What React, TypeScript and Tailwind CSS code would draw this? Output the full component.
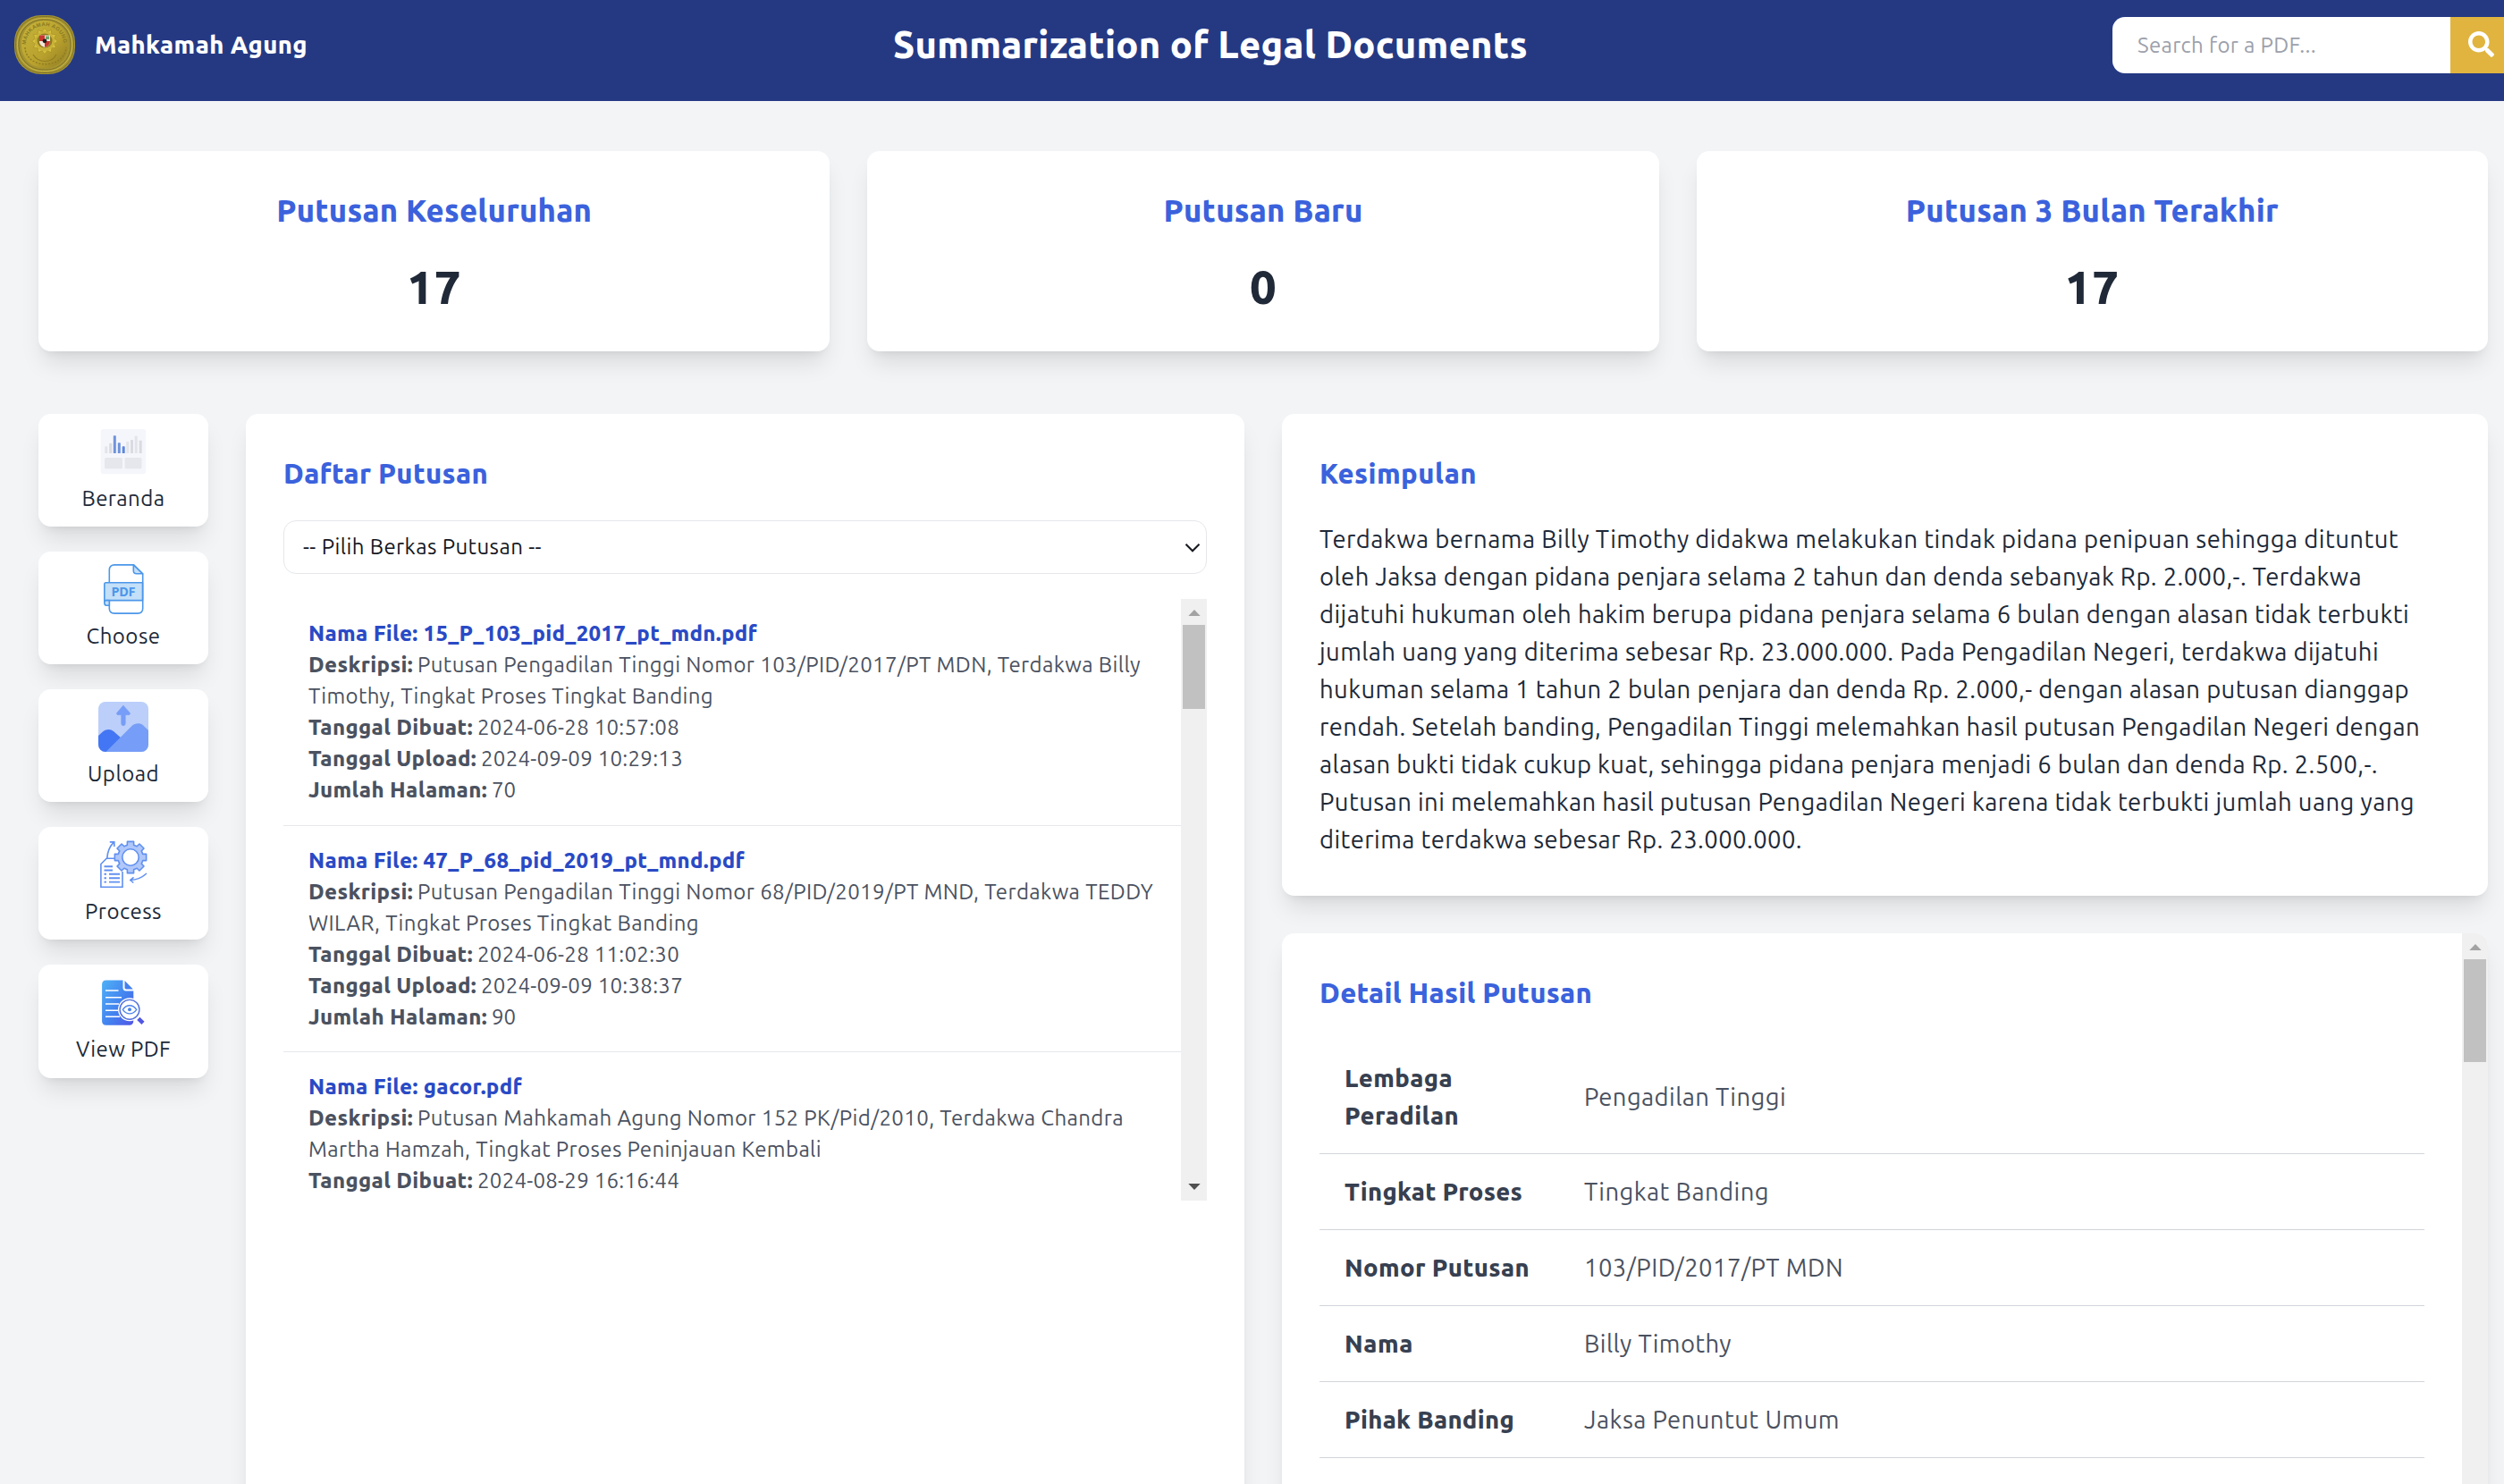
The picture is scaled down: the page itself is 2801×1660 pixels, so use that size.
import { useLayoutEffect, useRef, useState } from "react";
import type { ReactNode } from "react";
import { FaSearch } from "react-icons/fa";

/** One line of text whose tracking is adjusted so that it fills `w` pixels. */
function Fit({ w, children, className = "" }: { w: number; children: string; className?: string }) {
  const ref = useRef<HTMLSpanElement>(null);
  const [spacing, setSpacing] = useState(0);
  useLayoutEffect(() => {
    const el = ref.current;
    if (!el) return;
    el.style.letterSpacing = "0px";
    const natural = el.getBoundingClientRect().width;
    const next = (w - natural) / children.length;
    el.style.letterSpacing = `${next}px`;
    setSpacing(next);
  }, [w, children]);
  return (
    <span ref={ref} className={`inline-block whitespace-pre ${className}`} style={{ letterSpacing: `${spacing}px` }}>
      {children}
    </span>
  );
}

const CARD =
  "rounded-[14px] bg-white shadow-[0_17.5px_26px_-5px_rgba(0,0,0,0.1),0_7px_10.5px_-7px_rgba(0,0,0,0.1)]";
const HEADING = "h-[49px] text-[31px] leading-[49px] font-extrabold text-[#3b62dc]";

function CourtSeal() {
  const rays = Array.from({ length: 12 }, (_, i) => i * 30);
  return (
    <svg width="68" height="66" viewBox="0 0 68 66">
      <defs>
        <linearGradient id="gold" x1="0" y1="0" x2="1" y2="1">
          <stop offset="0" stopColor="#c6b43c" />
          <stop offset="0.6" stopColor="#b9a12d" />
          <stop offset="1" stopColor="#8d7a22" />
        </linearGradient>
        <path id="arc" d="M13 33 A21 21 0 0 1 55 33" />
      </defs>
      <rect width="68" height="66" rx="30" fill="#a59432" />
      <rect x="1.5" y="1.5" width="65" height="63" rx="29" fill="none" stroke="#786c24" strokeWidth="0.8" />
      <rect x="3.5" y="3.5" width="61" height="59" rx="28" fill="none" stroke="#cdbb48" strokeWidth="0.9" />
      <rect x="5" y="5" width="58" height="56" rx="27" fill="none" stroke="#7c6c20" strokeWidth="0.8" />
      <rect x="8" y="6" width="52" height="53" rx="25" fill="url(#gold)" />
      <text fontSize="6" fontFamily="Liberation Sans" fontWeight="700" fill="#8a7a22" letterSpacing="0.3">
        <textPath href="#arc">MAHKAMAH AGUNG</textPath>
      </text>
      <path d="M12 36 C13 61 56 61 58 36" fill="none" stroke="#8e7c22" strokeWidth="1.4" strokeDasharray="2 1.6" />
      <path d="M21 44 C27 54 42 54 47 44" fill="none" stroke="#8e7c22" strokeWidth="1.1" />
      {rays.map((a) => (
        <path key={a} d="M30 20 L34 14.5 L38 20 Z" fill="#d8c23e" stroke="#94801f" strokeWidth="0.4" transform={`rotate(${a} 34 29)`} />
      ))}
      <circle cx="34" cy="29" r="11" fill="#c9b238" />
      <ellipse cx="34" cy="28.6" rx="8.5" ry="8" fill="#8f7b22" />
      <path d="M28 22.5H40V29C40 33 37 35 34 36C31 35 28 33 28 29Z" fill="#efe9d8" />
      <path d="M28 22.5H34V29H28Z M34 29H40C40 33 37 35 34 36Z" fill="#c8372f" />
      <path d="M35 23.5H39V27H35Z" fill="#6aa56b" />
      <circle cx="34" cy="28.8" r="2.4" fill="#1c1c1c" />
    </svg>
  );
}

function DashboardIcon() {
  const bars = [
    [7.3, 22.3, "#e3e4ea"],
    [12.2, 18.7, "#d9dbe2"],
    [16.8, 10.3, "#6f93dc"],
    [21.8, 18.3, "#6f93dc"],
    [26.7, 22.3, "#5f87dc"],
    [31.3, 17, "#e3e4ea"],
    [36, 15, "#d9dbe2"],
    [40.7, 10.7, "#e3e4ea"],
    [45.7, 15.7, "#d9dbe2"],
  ] as const;
  return (
    <svg width="56" height="56" viewBox="0 0 56 56">
      <rect x="2.7" y="3" width="50.6" height="50.3" rx="3" fill="#f5f6fb" />
      {bars.map(([x, y, c]) => (
        <rect key={x} x={x} y={y} width="3" height={30 - y} rx="0.6" fill={c} />
      ))}
      <rect x="7" y="35" width="20" height="12.3" rx="1.5" fill="#e6e7ed" />
      <rect x="29.5" y="35" width="19" height="12.3" rx="1.5" fill="#e6e7ed" />
    </svg>
  );
}

function PdfIcon() {
  return (
    <svg width="56" height="56" viewBox="0 0 56 56" fill="none" stroke="#4c97ea" strokeWidth="1.6" strokeLinejoin="round">
      <path d="M12.3 21V6.5C12.3 3 14.5 0.9 18 0.9H39.5L49.7 11V49.5C49.7 53 47.5 55.1 44 55.1H18C14.5 55.1 12.3 53 12.3 49.5V40" />
      <path d="M39.3 0.9V7.5C39.3 9.5 40.5 10.8 42.8 10.8H49.7Z" fill="#c4dff8" />
      <path d="M8.5 20.8H49.5V40.6H8.5C7.3 40.6 6.8 41.2 6.8 42V22.8C6.8 21.5 7.4 20.8 8.5 20.8Z" fill="#c4dff8" />
      <path d="M12.3 40.6H8.6C6.2 40.6 6.2 46.2 9 46.2H12.3Z" fill="#c4dff8" />
      <text x="28" y="36" textAnchor="middle" fontFamily="Noto Sans" fontSize="14.5" fontWeight="700" fill="#4c97ea" stroke="none" textLength="27">
        PDF
      </text>
    </svg>
  );
}

function UploadIcon() {
  return (
    <svg width="56" height="56" viewBox="0 0 56 56">
      <defs>
        <clipPath id="frame">
          <rect width="56" height="56" rx="8" />
        </clipPath>
      </defs>
      <g clipPath="url(#frame)">
        <rect width="56" height="56" fill="#bbcffa" />
        <path d="M0 38L5.5 33C9 30.3 14 30.3 17 33L26 41L12 56H0Z" fill="#4376f4" />
        <path d="M8.5 56L37.5 27C41 23.6 46.5 23.3 50 26.2L56 32V56Z" fill="#769df7" />
      </g>
      <path d="M27.9 4.2L21 12.2C20.2 13.3 20.7 14.6 22 14.6H25.8V24.5A2.15 2.15 0 0 0 30.1 24.5V14.6H34C35.3 14.6 35.8 13.3 35 12.2Z" fill="#769df7" stroke="#769df7" strokeWidth="0.8" strokeLinejoin="round" />
    </svg>
  );
}

function gearPath(cx: number, cy: number, inner: number, outer: number) {
  const points: string[] = [];
  for (let i = 0; i < 8; i++) {
    const a = (i * 45 * Math.PI) / 180;
    const steps: [number, number][] = [
      [inner, -0.26],
      [outer, -0.2],
      [outer, 0.2],
      [inner, 0.26],
    ];
    for (const [r, d] of steps) {
      points.push(`${(cx + r * Math.cos(a + d)).toFixed(2)} ${(cy + r * Math.sin(a + d)).toFixed(2)}`);
    }
  }
  return `M${points.join("L")}Z`;
}

function ProcessIcon() {
  return (
    <svg width="56" height="56" viewBox="0 0 56 56" fill="none" stroke="#6090f0" strokeWidth="1.6">
      <path d="M18 21.3H9.2L2.9 27.5V53.2H27V36" />
      <path d="M6.5 30.2H16M6.5 34.5H16M6.5 38.8H9M12 38.8H24M6.5 43.2H9M12 43.2H24M6.5 47.6H9M12 47.6H24" strokeWidth="1.9" />
      <path d="M9.8 21C10.3 13 12.2 8.5 17 3.4M12.8 2.9H17.8V8" />
      <path d={gearPath(36, 20, 14.2, 18)} fill="#b0c7f9" strokeLinejoin="round" />
      <circle cx="36" cy="20" r="9.2" fill="#fff" />
      <path d="M54 38C48.5 43 42.5 45.3 36 45.5M39.5 42.3L35.8 45.5L39.3 48.5" />
    </svg>
  );
}

function ViewIcon() {
  return (
    <svg width="56" height="56" viewBox="0 0 56 56" fill="none">
      <defs>
        <linearGradient id="sheet" x1="4" y1="0" x2="52" y2="30" gradientUnits="userSpaceOnUse">
          <stop offset="0" stopColor="#4fb4f6" />
          <stop offset="0.6" stopColor="#4380ef" />
          <stop offset="1" stopColor="#5058e6" />
        </linearGradient>
      </defs>
      <path d="M8.5 3.4H27.5V12C27.5 14 28.5 15.4 31 15.4H39.3V49C39.3 52 37.5 53.7 34.8 53.7H8.5C5.8 53.7 4.1 52 4.1 49.2V8C4.1 5.2 5.8 3.4 8.5 3.4Z" fill="url(#sheet)" />
      <path d="M29.5 4L38.8 13.5H31.2C30 13.5 29.5 12.9 29.5 11.8Z" fill="#4380ef" />
      <path d="M8 15H22.5M8 22.8H26M8 30H23M8 37.2H22M8 44.3H24" stroke="#fff" strokeWidth="1.5" />
      <circle cx="35" cy="36.3" r="13" fill="#fff" />
      <circle cx="35" cy="36.3" r="10.9" stroke="#5270dc" strokeWidth="1.4" />
      <path d="M27.3 36.3C31.5 30.2 38.5 30.2 42.8 36.3C38.5 42.3 31.5 42.3 27.3 36.3Z" stroke="#4a82ea" strokeWidth="1.3" />
      <circle cx="35" cy="36.3" r="2" fill="#4a82ea" />
      <path d="M44.8 46.4L50 51.3" stroke="#5157e2" strokeWidth="4.6" />
    </svg>
  );
}

const stats = [
  { title: "Putusan Keseluruhan", w: 353, value: "17", vw: 61 },
  { title: "Putusan Baru", w: 223, value: "0", vw: 30 },
  { title: "Putusan 3 Bulan Terakhir", w: 417, value: "17", vw: 61 },
];

const menu: { label: string; w: number; icon: ReactNode }[] = [
  { label: "Beranda", w: 93, icon: <DashboardIcon /> },
  { label: "Choose", w: 83, icon: <PdfIcon /> },
  { label: "Upload", w: 80, icon: <UploadIcon /> },
  { label: "Process", w: 86, icon: <ProcessIcon /> },
  { label: "View PDF", w: 106, icon: <ViewIcon /> },
];

type Text = [string, number];
type FileItem = { name: Text; desc: Text; more: Text; created: Text; uploaded?: Text; pages?: Text };
const files: FileItem[] = [
  {
    name: ["Nama File: 15_P_103_pid_2017_pt_mdn.pdf", 502],
    desc: ["Putusan Pengadilan Tinggi Nomor 103/PID/2017/PT MDN, Terdakwa Billy", 809],
    more: ["Timothy, Tingkat Proses Tingkat Banding", 453],
    created: ["2024-06-28 10:57:08", 226],
    uploaded: ["2024-09-09 10:29:13", 226],
    pages: ["70", 27],
  },
  {
    name: ["Nama File: 47_P_68_pid_2019_pt_mnd.pdf", 488],
    desc: ["Putusan Pengadilan Tinggi Nomor 68/PID/2019/PT MND, Terdakwa TEDDY", 823],
    more: ["WILAR, Tingkat Proses Tingkat Banding", 437],
    created: ["2024-06-28 11:02:30", 226],
    uploaded: ["2024-09-09 10:38:37", 226],
    pages: ["90", 27],
  },
  {
    name: ["Nama File: gacor.pdf", 239],
    desc: ["Putusan Mahkamah Agung Nomor 152 PK/Pid/2010, Terdakwa Chandra", 790],
    more: ["Martha Hamzah, Tingkat Proses Peninjauan Kembali", 574],
    created: ["2024-08-29 16:16:44", 226],
  },
];

const summary: Text[] = [
  ["Terdakwa bernama Billy Timothy didakwa melakukan tindak pidana penipuan sehingga dituntut", 1207],
  ["oleh Jaksa dengan pidana penjara selama 2 tahun dan denda sebanyak Rp. 2.000,-. Terdakwa", 1166],
  ["dijatuhi hukuman oleh hakim berupa pidana penjara selama 6 bulan dengan alasan tidak terbukti", 1219],
  ["jumlah uang yang diterima sebesar Rp. 23.000.000. Pada Pengadilan Negeri, terdakwa dijatuhi", 1185],
  ["hukuman selama 1 tahun 2 bulan penjara dan denda Rp. 2.000,- dengan alasan putusan dianggap", 1219],
  ["rendah. Setelah banding, Pengadilan Tinggi melemahkan hasil putusan Pengadilan Negeri dengan", 1231],
  ["alasan bukti tidak cukup kuat, sehingga pidana penjara menjadi 6 bulan dan denda Rp. 2.500,-.", 1184],
  ["Putusan ini melemahkan hasil putusan Pengadilan Negeri karena tidak terbukti jumlah uang yang", 1225],
  ["diterima terdakwa sebesar Rp. 23.000.000.", 540],
];

const details: { label: Text[]; value: Text }[] = [
  { label: [["Lembaga", 121], ["Peradilan", 128]], value: ["Pengadilan Tinggi", 226] },
  { label: [["Tingkat Proses", 199]], value: ["Tingkat Banding", 207] },
  { label: [["Nomor Putusan", 207]], value: ["103/PID/2017/PT MDN", 290] },
  { label: [["Nama", 77]], value: ["Billy Timothy", 165] },
  { label: [["Pihak Banding", 190]], value: ["Jaksa Penuntut Umum", 286] },
];

function Field({ label, w, value }: { label: string; w: number; value: Text }) {
  return (
    <div className="flex h-[35px] gap-[5px]">
      <Fit w={w} className="font-extrabold">
        {label}
      </Fit>
      <Fit w={value[1]}>{value[0]}</Fit>
    </div>
  );
}

function Arrow({ down = false, className = "" }: { down?: boolean; className?: string }) {
  return (
    <svg width="14" height="7" viewBox="0 0 14 7" className={className}>
      <path d={down ? "M0.3 0H13.7L7 7Z" : "M0.3 7H13.7L7 0Z"} fill="currentColor" />
    </svg>
  );
}

export default function App() {
  return (
    <div className="flex h-[1660px] w-[2801px] flex-col overflow-hidden bg-[#f2f4f6] font-['Ubuntu','Noto_Sans',sans-serif] text-[27.4px] leading-[42px] text-[#202938]">
      <header className="flex h-[113px] shrink-0 items-start justify-between bg-[#253983] pt-[17px] pl-4 text-white">
        <div className="flex h-[66px] w-[983px] items-center">
          <CourtSeal />
          <Fit w={238} className="ml-[22px] font-extrabold">
            Mahkamah Agung
          </Fit>
        </div>
        <h1 className="flex h-[66px] grow items-center text-[41.5px] font-extrabold">
          <Fit w={710}>Summarization of Legal Documents</Fit>
        </h1>
        <div className="mt-[2px] flex h-[63px] w-[438px]">
          <div className="flex w-[378px] items-center rounded-l-[14px] bg-white pl-[28px] text-[24px] text-[#9ca0ab]">
            <Fit w={200}>Search for a PDF...</Fit>
          </div>
          <button className="flex w-[60px] items-center bg-[#e0b43e] pl-[20px]">
            <FaSearch className="size-[29px] -translate-y-[1px]" />
          </button>
        </div>
      </header>

      <section className="mt-14 ml-[43px] grid w-[2740px] shrink-0 grid-cols-3 gap-[42px] text-center">
        {stats.map((s) => (
          <div key={s.title} className={`h-[224px] pt-[42px] ${CARD}`}>
            <h2 className="h-[49px] text-[34.5px] leading-[49px] font-extrabold text-[#3b62dc]">
              <Fit w={s.w}>{s.title}</Fit>
            </h2>
            <p className="mt-[29px] text-[52.5px] leading-[63px] font-extrabold">
              <Fit w={s.vw}>{s.value}</Fit>
            </p>
          </div>
        ))}
      </section>

      <main className="mt-[70px] ml-[43px] flex w-[2740px] grow items-start gap-[42px]">
        <nav className="flex w-[190px] flex-col gap-7">
          {menu.map((m) => (
            <div key={m.label} className={`flex h-[126px] flex-col items-center pt-[14px] text-[24px] leading-[35px] last:h-[127px] ${CARD}`}>
              {m.icon}
              <Fit w={m.w} className="mt-[7px]">
                {m.label}
              </Fit>
            </div>
          ))}
        </nav>

        <section className={`h-[1400px] w-[1117px] px-[42px] pt-[42px] ${CARD}`}>
          <h2 className={HEADING}>
            <Fit w={229}>Daftar Putusan</Fit>
          </h2>
          <div className="mt-[28px] flex h-[60px] items-center justify-between rounded-[14px] border border-[#e5e7eb] pr-[6px] pl-[21px] text-[24px] text-[#15181f]">
            <Fit w={267}>-- Pilih Berkas Putusan --</Fit>
            <svg width="18" height="12" viewBox="0 0 18 12" fill="none" stroke="#15181f" strokeWidth="2" className="mt-[2px]">
              <path d="M1.5 1.8L9 9.3L16.5 1.8" />
            </svg>
          </div>
          <div className="mt-7 flex h-[673px] overflow-hidden">
            <ul className="w-[1004px] text-[24px] leading-[35px] text-[#4b5260]">
              {files.map((f) => (
                <li key={f.name[0]} className="flex h-[253.5px] flex-col border-b border-[#e5e7eb] px-7 pt-[21px] last:h-[166px] last:border-0">
                  <div className="h-[35px] font-extrabold text-[#2a4ac5]">
                    <Fit w={f.name[1]}>{f.name[0]}</Fit>
                  </div>
                  <Field label="Deskripsi:" w={117} value={f.desc} />
                  <div className="h-[35px]">
                    <Fit w={f.more[1]}>{f.more[0]}</Fit>
                  </div>
                  <Field label="Tanggal Dibuat:" w={184} value={f.created} />
                  {f.uploaded && <Field label="Tanggal Upload:" w={188} value={f.uploaded} />}
                  {f.pages && <Field label="Jumlah Halaman:" w={200} value={f.pages} />}
                </li>
              ))}
            </ul>
            <div className="flex w-[29px] flex-col items-center bg-[#f0f0f0] pt-3 pb-3">
              <Arrow className="text-[#a3a3a3]" />
              <div className="mt-[10px] h-[94px] w-[25px] bg-[#c1c1c1]" />
              <Arrow down className="mt-auto text-[#505050]" />
            </div>
          </div>
        </section>

        <div className="flex w-[1349px] flex-col gap-[42px]">
          <section className={`h-[539px] px-[42px] pt-[42px] ${CARD}`}>
            <h2 className={`mb-7 ${HEADING}`}>
              <Fit w={176}>Kesimpulan</Fit>
            </h2>
            {summary.map(([t, w]) => (
              <div key={t} className="h-[42px]">
                <Fit w={w}>{t}</Fit>
              </div>
            ))}
          </section>

          <section className={`flex h-[800px] overflow-hidden ${CARD}`}>
            <div className="w-[1320px] px-[42px] pt-[42px]">
              <h2 className={`mb-[29px] ${HEADING}`}>
                <Fit w={305}>Detail Hasil Putusan</Fit>
              </h2>
              {details.map((d) => (
                <div key={d.value[0]} className="flex items-center border-b border-[#d1d5db] px-7 py-[21px]">
                  <div className="flex w-[268px] flex-col items-start font-extrabold text-[#374050]">
                    {d.label.map(([t, w]) => (
                      <Fit key={t} w={w}>
                        {t}
                      </Fit>
                    ))}
                  </div>
                  <div className="h-[42px] text-[#4b5260]">
                    <Fit w={d.value[1]}>{d.value[0]}</Fit>
                  </div>
                </div>
              ))}
            </div>
            <div className="flex w-[29px] flex-col items-center bg-[#f0f0f0] pt-3">
              <Arrow className="text-[#a3a3a3]" />
              <div className="mt-[10px] h-[115px] w-[25px] bg-[#c1c1c1]" />
            </div>
          </section>
        </div>
      </main>
    </div>
  );
}
